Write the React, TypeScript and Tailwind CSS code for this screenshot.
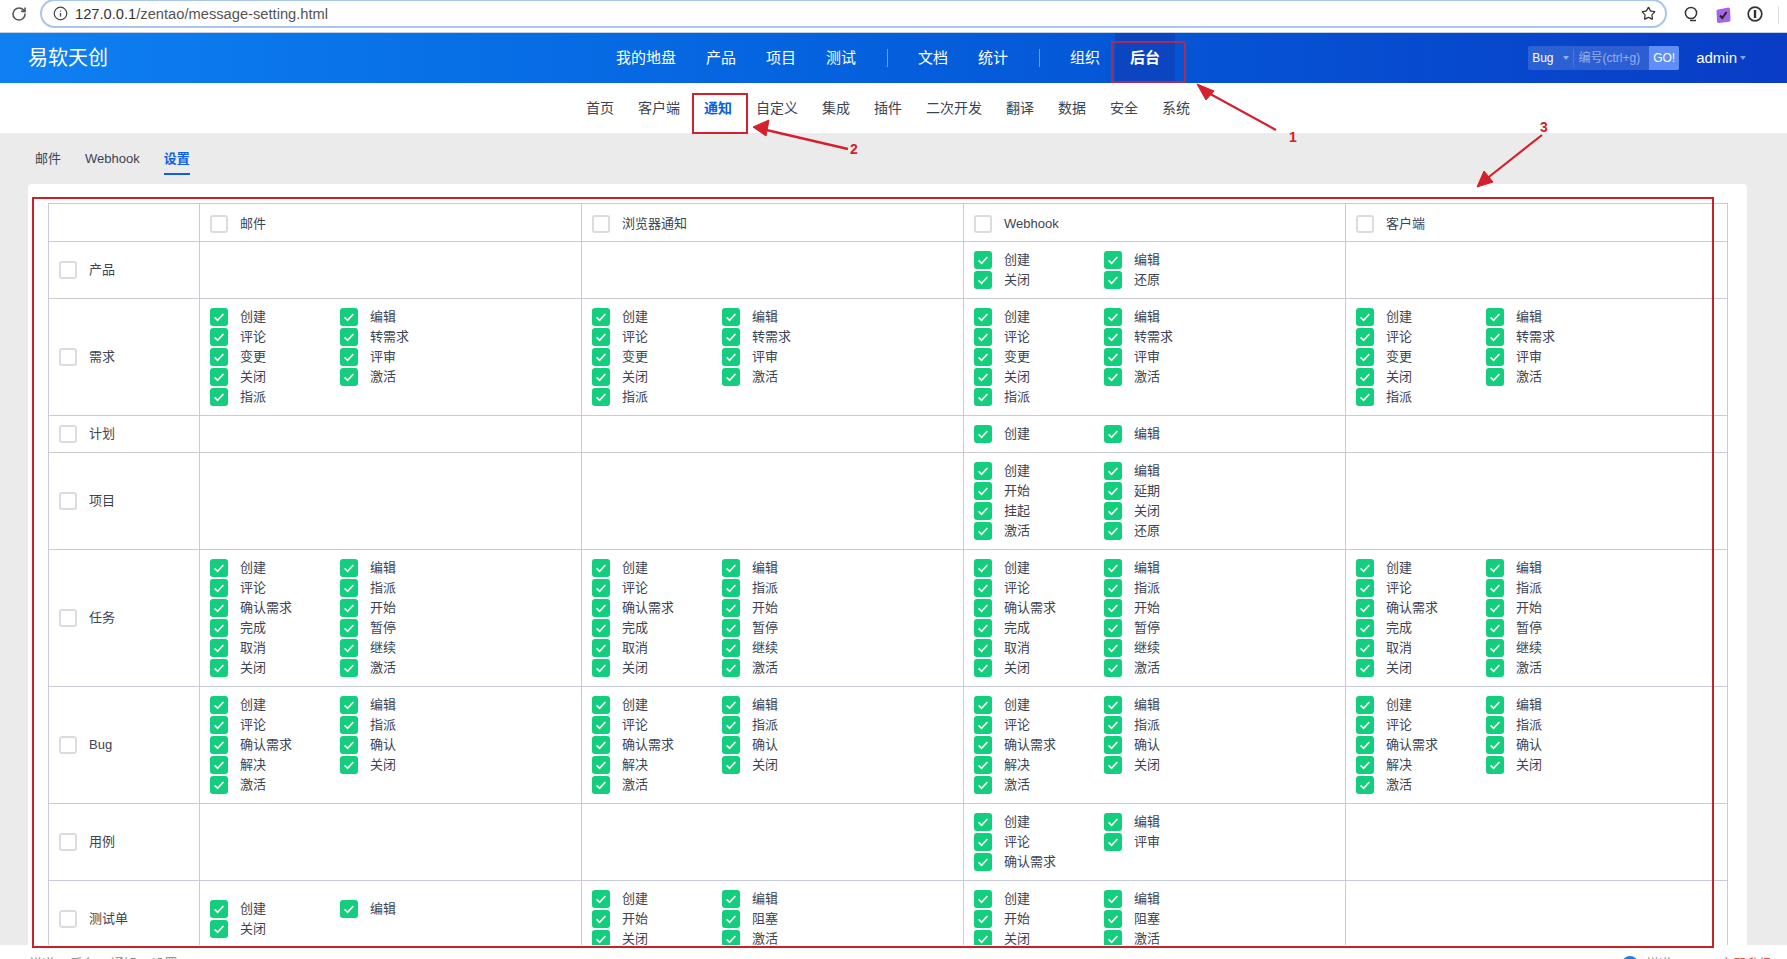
import { Info, RotateCw, Star } from "lucide-react";

const FONT = "font-['Liberation_Sans','Noto_Sans_CJK_SC',sans-serif]";

const STORY = ["创建", "编辑", "评论", "转需求", "变更", "评审", "关闭", "激活", "指派"];
const TASK = ["创建", "编辑", "评论", "指派", "确认需求", "开始", "完成", "暂停", "取消", "继续", "关闭", "激活"];
const BUG = ["创建", "编辑", "评论", "指派", "确认需求", "确认", "解决", "关闭", "激活"];
const TESTTASK = ["创建", "编辑", "开始", "阻塞", "关闭", "激活"];

const CHANNELS = ["邮件", "浏览器通知", "Webhook", "客户端"];

const ROWS: { name: string; cells: string[][] }[] = [
  { name: "产品", cells: [[], [], ["创建", "编辑", "关闭", "还原"], []] },
  { name: "需求", cells: [STORY, STORY, STORY, STORY] },
  { name: "计划", cells: [[], [], ["创建", "编辑"], []] },
  { name: "项目", cells: [[], [], ["创建", "编辑", "开始", "延期", "挂起", "关闭", "激活", "还原"], []] },
  { name: "任务", cells: [TASK, TASK, TASK, TASK] },
  { name: "Bug", cells: [BUG, BUG, BUG, BUG] },
  { name: "用例", cells: [[], [], ["创建", "编辑", "评论", "评审", "确认需求"], []] },
  { name: "测试单", cells: [["创建", "编辑", "关闭"], TESTTASK, TESTTASK, []] },
];

const MAIN_NAV = [["我的地盘", "产品", "项目", "测试"], ["文档", "统计"], ["组织", "后台"]];
const SUB_NAV = ["首页", "客户端", "通知", "自定义", "集成", "插件", "二次开发", "翻译", "数据", "安全", "系统"];

function Box({ checked, label }: { checked?: boolean; label: string }) {
  return (
    <label className="flex h-5 items-center gap-3 text-[13px] leading-5 text-[#3c4353]">
      {checked ? (
        <span className="flex h-[18px] w-[18px] shrink-0 items-center justify-center rounded-[3px] bg-[#13cf7d]">
          <svg viewBox="0 0 18 18" className="h-[18px] w-[18px]" fill="none" stroke="white" strokeWidth="1.6">
            <path d="M4.6 9.4 7.6 12.4 13.4 6" />
          </svg>
        </span>
      ) : (
        <span className="h-[18px] w-[18px] shrink-0 rounded-[3px] border-2 border-[#dcdcdc] bg-white" />
      )}
      {label}
    </label>
  );
}

function BrowserBar() {
  return (
    <div className="flex h-[33px] items-start border-b border-[#c3d0e2] bg-white">
      <RotateCw className="ml-[11px] mt-[6px] h-[16px] w-[16px] text-[#555]" strokeWidth={2.4} />
      <div className="ml-[13px] flex h-[29px] w-[1627px] -translate-y-px items-center rounded-full border-2 border-[#a8c5ee] pl-[11px] pr-[9px]">
        <Info className="h-[15px] w-[15px] text-[#444]" strokeWidth={2} />
        <span className="ml-[7px] pt-px text-[14.7px] text-[#333]">
          127.0.0.1<span className="text-[#555]">/zentao/message-setting.html</span>
        </span>
        <Star className="ml-auto h-[15px] w-[15px] text-[#333]" strokeWidth={2} />
      </div>
      <svg viewBox="0 0 18 18" className="ml-[15px] mt-[5px] h-[18px] w-[18px]" fill="none" stroke="#333" strokeWidth="1.5">
        <circle cx="9" cy="8" r="5.6" />
        <path d="M8 15.5h6" />
      </svg>
      <svg viewBox="0 0 18 18" className="ml-[14px] mt-[6px] h-[18px] w-[18px]">
        <path d="M4 3.5 14.5 1.5Q16 1.5 16 3L16.5 14Q16.5 15.5 15 15.8L5 17Q3.2 17 3 15.5L2.5 5Q2.5 3.8 4 3.5Z" fill="#a565e8" />
        <path d="M6 9.5 8.3 12 12.6 6" fill="none" stroke="#222" strokeWidth="2" />
      </svg>
      <svg viewBox="0 0 18 18" className="ml-[14px] mt-[5px] h-[18px] w-[18px]" fill="none" stroke="#333">
        <circle cx="9" cy="9" r="6.8" strokeWidth="1.7" />
        <path d="M9 5v8" strokeWidth="2.4" />
      </svg>
      <div className="ml-[14px] mt-[6px] h-[18px] w-px bg-[#ddd]" />
    </div>
  );
}

function Header() {
  return (
    <header className="flex h-[50px] items-stretch bg-linear-to-r from-[#0f80f2] to-[#0a3cc6] text-white">
      <div className="flex w-[601px] items-center pl-[28px] text-[20px]">易软天创</div>
      <nav className="flex items-stretch text-[15px]">
        {MAIN_NAV.map((group, i) => (
          <div key={i} className="flex items-stretch">
            {i > 0 && <div className="my-[16px] ml-4 mr-[15px] w-px bg-white/40" />}
            {group.map((item) => (
              <a key={item} className={`flex items-center px-[15px] ${item === "后台" ? "bg-[#0b46c0] font-bold" : ""}`}>
                {item}
              </a>
            ))}
          </div>
        ))}
      </nav>
      <div className="ml-auto flex items-center pr-[41px]">
        <div className="flex h-6 w-[151px] items-center rounded-[2px] bg-white/15 text-[12px]">
          <span className="pl-[4px]">Bug</span>
          <span className="ml-[9px] border-x-[3.5px] border-t-[4px] border-x-transparent border-t-white/50" />
          <span className="ml-[4px] h-[18px] w-px bg-white/15" />
          <span className="ml-[5px] text-white/50">编号(ctrl+g)</span>
          <span className="ml-auto flex h-6 w-[30px] items-center justify-center rounded-r-[2px] bg-[#5f8ef6]">GO!</span>
        </div>
        <span className="ml-[17px] text-[15px]">admin</span>
        <span className="ml-[3px] border-x-[3.5px] border-t-[4px] border-x-transparent border-t-white/50" />
      </div>
    </header>
  );
}

function SubNav() {
  return (
    <nav className="flex h-[50px] items-center justify-center gap-6 bg-white pr-[11px] text-[14px] text-[#3c4353]">
      {SUB_NAV.map((item) => (
        <a key={item} className={item === "通知" ? "font-bold text-[#0c60e1]" : ""}>
          {item}
        </a>
      ))}
    </nav>
  );
}

function MatrixTable() {
  const cell = "border border-[#c9ccd8] px-[10px] py-2 align-middle";
  return (
    <table className="w-full table-fixed border-collapse">
      <thead>
        <tr className="h-[38px]">
          <th className="w-[151px] border border-[#c9ccd8]" />
          {CHANNELS.map((c) => (
            <th key={c} className="border border-[#c9ccd8] px-[10px] pb-[7px] pt-[9px] align-middle font-normal">
              <Box label={c} />
            </th>
          ))}
        </tr>
      </thead>
      <tbody>
        {ROWS.map((row) => (
          <tr key={row.name}>
            <td className={cell}>
              <Box label={row.name} />
            </td>
            {row.cells.map((items, i) => (
              <td key={i} className={cell}>
                <div className="grid w-[260px] grid-cols-2">
                  {items.map((item) => (
                    <Box key={item} checked label={item} />
                  ))}
                </div>
              </td>
            ))}
          </tr>
        ))}
      </tbody>
    </table>
  );
}

function Annotations() {
  return (
    <>
      <div className="absolute left-[1111px] top-[41px] h-[42px] w-[75px] border-2 border-[#d0243a]/80" />
      <div className="absolute left-[692px] top-[93px] h-[41px] w-[56px] border-2 border-[#d3202c]" />
      <div className="absolute left-[32px] top-[197px] h-[751px] w-[1682px] border-2 border-[#c9202c]" />
      <svg className="absolute inset-0 h-full w-full" viewBox="0 0 1787 959" fill="#d3202c" stroke="#d3202c">
        <path d="M1276 130 1203 90" strokeWidth="2.2" />
        <path d="M1197 84 1214 91 1206 100Z" />
        <path d="M848 149 762 129" strokeWidth="2.6" />
        <path d="M753 127 769 120 766 136Z" />
        <path d="M1542 135 1485 180" strokeWidth="2.2" />
        <path d="M1477 187 1484 171 1493 182Z" />
      </svg>
      <span className="absolute left-[1289px] top-[129px] text-[14px] font-bold leading-4 text-[#d3202c]">1</span>
      <span className="absolute left-[850px] top-[141px] text-[14px] font-bold leading-4 text-[#d3202c]">2</span>
      <span className="absolute left-[1540px] top-[119px] text-[14px] font-bold leading-4 text-[#d3202c]">3</span>
    </>
  );
}

export default function App() {
  return (
    <div className={`${FONT} relative flex h-[959px] w-full flex-col overflow-hidden bg-white`}>
      <BrowserBar />
      <Header />
      <SubNav />
      <main className="flex min-h-0 flex-1 flex-col bg-[#ebebeb] pl-[28px] pr-[40px]">
        <div className="flex h-[51px] items-start gap-6 pl-[7px] pt-[16px] text-[13px] text-[#3c4353]">
          <a>邮件</a>
          <a>Webhook</a>
          <a className="border-b-2 border-[#0c60e1] pb-[4px] font-bold text-[#0c60e1]">设置</a>
        </div>
        <div className="min-h-0 flex-1 overflow-hidden rounded-t-[4px] bg-white pl-5 pr-[19px] pt-[19px]">
          <MatrixTable />
        </div>
      </main>
      <footer className="flex h-[14px] items-start overflow-hidden bg-white pl-[29px] pr-[15px] pt-[11px] text-[13px] leading-4 text-[#888]">
        <span>禅道 &gt; 后台 &gt; 通知 &gt; 设置</span>
        <span className="ml-auto flex items-center gap-2">
          <span className="h-4 w-4 rounded-full bg-[#1a7fe8]" />
          <span>禅道</span>
          <span className="ml-10 text-[#d9534f]">立即升级</span>
        </span>
      </footer>
      <Annotations />
    </div>
  );
}
